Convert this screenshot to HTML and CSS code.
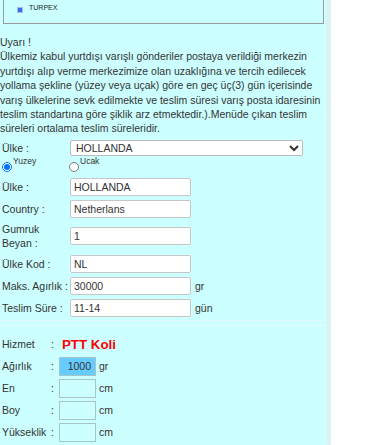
FILE: index.html
```html
<!DOCTYPE html>
<html lang="tr">
<head>
    <meta charset="UTF-8">
    <meta name="viewport" content="width=device-width, initial-scale=1.0">
    <title>Gönderi Hesaplama</title>
    <link rel="stylesheet" href="styles.css">
</head>
<body>
    <div class="page">
        <div class="panel">
            <div class="carrier">
                <span class="bullet"></span>
                <span class="carrier-name">TURPEX</span>
            </div>

            <p class="notice">Uyarı !<br>Ülkemiz kabul yurtdışı varışlı gönderiler postaya verildiği merkezin yurtdışı alıp verme merkezimize olan uzaklığına ve tercih edilecek yollama şekline (yüzey veya uçak) göre en geç üç(3) gün içerisinde varış ülkelerine sevk edilmekte ve teslim süresi varış posta idaresinin teslim standartına göre şiklik arz etmektedir.).Menüde çıkan teslim süreleri ortalama teslim süreleridir.</p>

            <div class="form">
                <div class="row first">
                    <label class="lbl">Ülke :</label>
                    <select class="sel">
                        <option>HOLLANDA</option>
                    </select>
                </div>
                <div class="row radios">
                    <label class="opt"><input type="radio" name="yol" checked><span>Yuzey</span></label>
                    <label class="opt"><input type="radio" name="yol"><span>Ucak</span></label>
                </div>
                <div class="row tight">
                    <label class="lbl">Ülke :</label>
                    <input class="txt" type="text" value="HOLLANDA">
                </div>
                <div class="row">
                    <label class="lbl">Country :</label>
                    <input class="txt" type="text" value="Netherlans">
                </div>
                <div class="row">
                    <label class="lbl two">Gumruk<br>Beyan :</label>
                    <input class="txt" type="text" value="1">
                </div>
                <div class="row">
                    <label class="lbl">Ülke Kod :</label>
                    <input class="txt" type="text" value="NL">
                </div>
                <div class="row">
                    <label class="lbl">Maks. Agırlık :</label>
                    <input class="txt" type="text" value="30000">
                    <span class="unit">gr</span>
                </div>
                <div class="row">
                    <label class="lbl">Teslim Süre :</label>
                    <input class="txt" type="text" value="11-14">
                    <span class="unit">gün</span>
                </div>
            </div>
        </div>

        <div class="calc">
            <div class="crow">
                <span class="clbl">Hizmet</span>
                <span class="colon">:</span>
                <span class="service">PTT Koli</span>
            </div>
            <div class="crow">
                <span class="clbl">Ağırlık</span>
                <span class="colon">:</span>
                <input class="cin filled" type="text" value="1000">
                <span class="cunit">gr</span>
            </div>
            <div class="crow">
                <span class="clbl">En</span>
                <span class="colon">:</span>
                <input class="cin" type="text">
                <span class="cunit">cm</span>
            </div>
            <div class="crow">
                <span class="clbl">Boy</span>
                <span class="colon">:</span>
                <input class="cin" type="text">
                <span class="cunit">cm</span>
            </div>
            <div class="crow">
                <span class="clbl">Yükseklik</span>
                <span class="colon">:</span>
                <input class="cin" type="text">
                <span class="cunit">cm</span>
            </div>
        </div>
    </div>
</body>
</html>
```

FILE: styles.css
```css
:root {
    --panel-bg: #ccffff;
    --edge: #d8f4f4;
    --line: #e4fcfc;
    --text: #333333;
}

body {
    margin: 0;
    background: #ffffff;
    color: var(--text);
    font-family: 'Liberation Sans', Arial, sans-serif;
    font-size: 10.5px;
}

.page {
    width: 326px;
    background: var(--panel-bg);
    border-right: 5px solid var(--edge);
    padding-bottom: 20px;
}

.panel {
    width: 324px;
    border-right: 1px solid var(--line);
    border-bottom: 1px solid var(--line);
    padding-bottom: 3px;
}

/* carrier box, its top is scrolled out of view */
.carrier {
    display: flex;
    align-items: flex-start;
    height: 24px;
    margin-left: 3px;
    padding: 3px 0 0 13px;
    box-sizing: border-box;
    border: 1px solid #999999;
    border-top: 0;
}

.bullet {
    width: 4px;
    height: 4px;
    margin: 4px 6px 0 0;
    border: 1px solid #a3bbee;
    background: #3b6fe0;
}

.carrier-name {
    font-size: 7px;
    line-height: 9px;
    color: #222222;
}

.notice {
    margin: 11px 0 0;
    line-height: 14.4px;
}

.form {
    padding-left: 2px;
}

.row {
    display: flex;
    align-items: center;
    margin-top: 4px;
}

.row.radios {
    align-items: flex-start;
    height: 20px;
    margin-top: 0;
}

.row.tight {
    margin-top: 2px;
}

.lbl {
    width: 68px;
    flex-shrink: 0;
}

.lbl.two {
    line-height: 14.4px;
}

.sel {
    width: 233px;
    height: 16px;
    padding: 0 0 0 1px;
    border: 1px solid #bbbbbb;
    border-radius: 2px;
    background: #ffffff;
    color: var(--text);
    font: inherit;
}

.opt {
    display: inline-flex;
    align-items: flex-start;
    font-size: 8.5px;
    line-height: 10px;
}

.opt:first-child {
    width: 67px;
}

.opt input {
    width: 10px;
    height: 10px;
    margin: 6px 1px 0 0;
}

.txt {
    width: 121px;
    height: 18px;
    box-sizing: border-box;
    padding: 0 3px;
    border: 1px solid #c6c6c6;
    border-radius: 2px;
    background: #ffffff;
    color: var(--text);
    font: inherit;
}

.unit {
    margin-left: 4px;
}

.calc {
    margin-top: 4px;
    border-top: 1px solid var(--line);
    border-right: 1px solid var(--line);
    padding: 9px 0 0 2px;
}

.crow {
    display: flex;
    align-items: center;
    height: 19px;
    margin-bottom: 3px;
}

.clbl {
    width: 48px;
}

.colon {
    width: 8px;
    padding-left: 1px;
}

.service {
    margin-left: 3px;
    color: #ff0000;
    font-size: 13.3px;
    font-weight: bold;
}

.cin {
    width: 37px;
    height: 19px;
    box-sizing: border-box;
    padding: 0 4px;
    border: 1px solid #a8c4c4;
    background: transparent;
    color: var(--text);
    font: inherit;
    text-align: right;
}

.cin.filled {
    background: #66ccff;
}

.cunit {
    margin-left: 3px;
}
```
